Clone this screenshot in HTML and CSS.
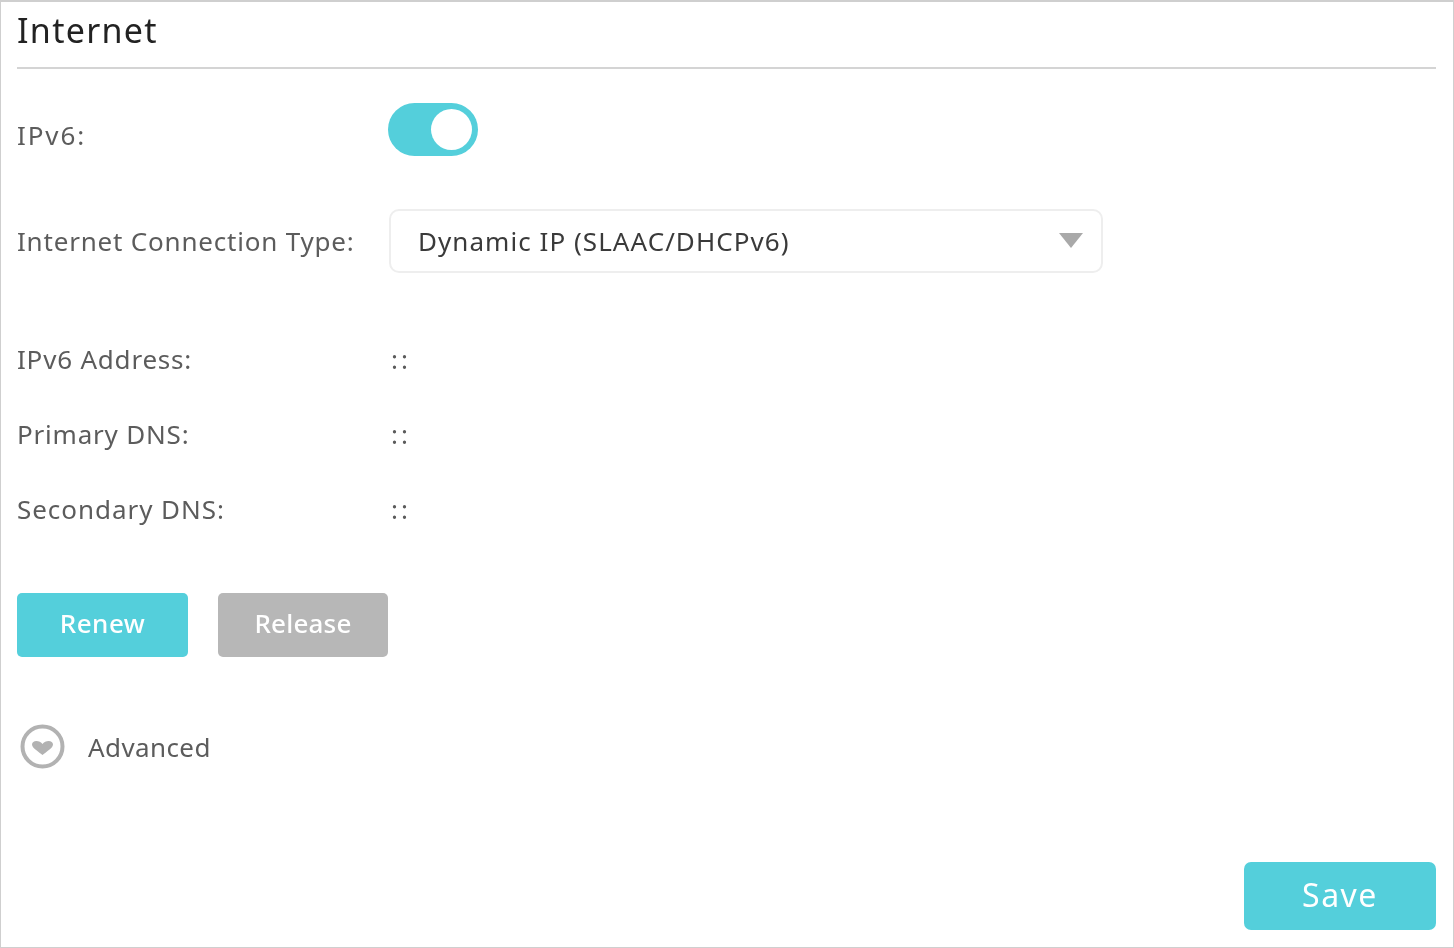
FILE: index.html
```html
<!DOCTYPE html>
<html lang="en">
<head>
<meta charset="utf-8">
<title>Internet</title>
<link rel="stylesheet" href="styles.css">
</head>
<body>
<main class="panel">
  <h1 class="title">Internet</h1>
  <div class="row row-toggle">
    <span class="label label-wide">IPv6:</span>
    <span class="toggle"><span class="knob"></span></span>
  </div>
  <div class="row row-select">
    <span class="label">Internet Connection Type:</span>
    <div class="select">
      <span>Dynamic IP (SLAAC/DHCPv6)</span>
      <span class="arrow"></span>
    </div>
  </div>
  <div class="info">
    <div class="row row-info"><span class="label">IPv6 Address:</span><span class="value">::</span></div>
    <div class="row row-info"><span class="label">Primary DNS:</span><span class="value">::</span></div>
    <div class="row row-info"><span class="label label-sec">Secondary DNS:</span><span class="value">::</span></div>
  </div>
  <div class="actions">
    <button class="btn btn-primary">Renew</button>
    <button class="btn btn-disabled">Release</button>
  </div>
  <div class="advanced">
    <svg class="adv-icon" width="46" height="46" viewBox="0 0 46 46" aria-hidden="true">
      <circle cx="22.500" cy="22.500" r="20" fill="none" stroke="#b2b2b2" stroke-width="4"/>
      <path d="M22.500 20C20 16 12 15.500 12 20.500C12 24 18.500 27.500 22.500 31C26.500 27.500 33 24 33 20.500C33 15.500 25 16 22.500 20z" fill="#b2b2b2"/>
    </svg>
    <span class="label label-adv">Advanced</span>
  </div>
  <div class="footer">
    <button class="btn btn-save">Save</button>
  </div>
</main>
</body>
</html>
```

FILE: styles.css
```css
* { box-sizing: border-box; }
html, body { margin: 0; height: 100%; background: #fff; }
body { font-family: "Noto Sans", sans-serif; color: #5c5c5c; overflow: hidden; }
.panel {
  width: 1454px; height: 948px;
  border: 1px solid #cfcfcf; border-top-width: 2px;
  padding: 0 17px 16px 16px;
  display: flex; flex-direction: column;
  filter: blur(0.4px);
}
.title {
  margin: 0; height: 67px;
  font-size: 34px; font-weight: 400; line-height: 56px; color: #222;
  letter-spacing: 1.3px;
  border-bottom: 2px solid #d4d4d4;
}
.row { display: flex; align-items: center; }
.label { font-size: 26px; letter-spacing: 0.8px; color: #5c5c5c; width: 372px; flex: none; }
.label-wide { letter-spacing: 1.9px; width: 371px; }
.label-adv { letter-spacing: 0.4px; width: auto; }
.label-sec { letter-spacing: 0.95px; }
.row-toggle { margin-top: 34px; height: 52px; }
.row-toggle .label { position: relative; top: 6px; }
.toggle {
  width: 90px; height: 53px; border-radius: 27px; background: #54cfdb;
  display: flex; align-items: center; justify-content: flex-end; padding-right: 6px;
}
.knob { width: 41px; height: 41px; border-radius: 50%; background: #fff; }
.row-select { margin-top: 54px; }
.select {
  width: 714px; height: 64px; border: 2px solid #eee; border-radius: 10px;
  padding: 0 18px 0 27px; display: flex; align-items: center; justify-content: space-between;
  font-size: 26px; letter-spacing: 1.05px; color: #3a3a3a;
}
.arrow { width: 0; height: 0; margin-bottom: 2px; border-left: 12px solid transparent; border-right: 12px solid transparent; border-top: 15px solid #a9a9a9; }
.info { margin-top: 68px; display: flex; flex-direction: column; gap: 39px; }
.row-info { height: 36px; }
.value { font-size: 26px; letter-spacing: 3px; color: #5c5c5c; padding-left: 2px; }
.actions { margin-top: 66px; display: flex; gap: 30px; }
.btn { border: 0; color: #fff; font-family: inherit; padding: 0; }
.btn-primary, .btn-disabled { height: 64px; border-radius: 5px; font-size: 26px; padding-bottom: 4px; font-weight: 500; }
.btn-primary { width: 171px; background: #54cfdb; letter-spacing: 0.5px; }
.btn-disabled { width: 170px; background: #b7b7b7; letter-spacing: 0.2px; }
.advanced { margin-top: 67px; display: flex; align-items: center; gap: 22px; padding-left: 3px; }
.footer { margin-top: auto; display: flex; justify-content: flex-end; padding-bottom: 1px; }
.btn-save { width: 192px; height: 68px; border-radius: 7px; background: #54cfdb; font-size: 32px; letter-spacing: 1.5px; padding-bottom: 3px; }
```
